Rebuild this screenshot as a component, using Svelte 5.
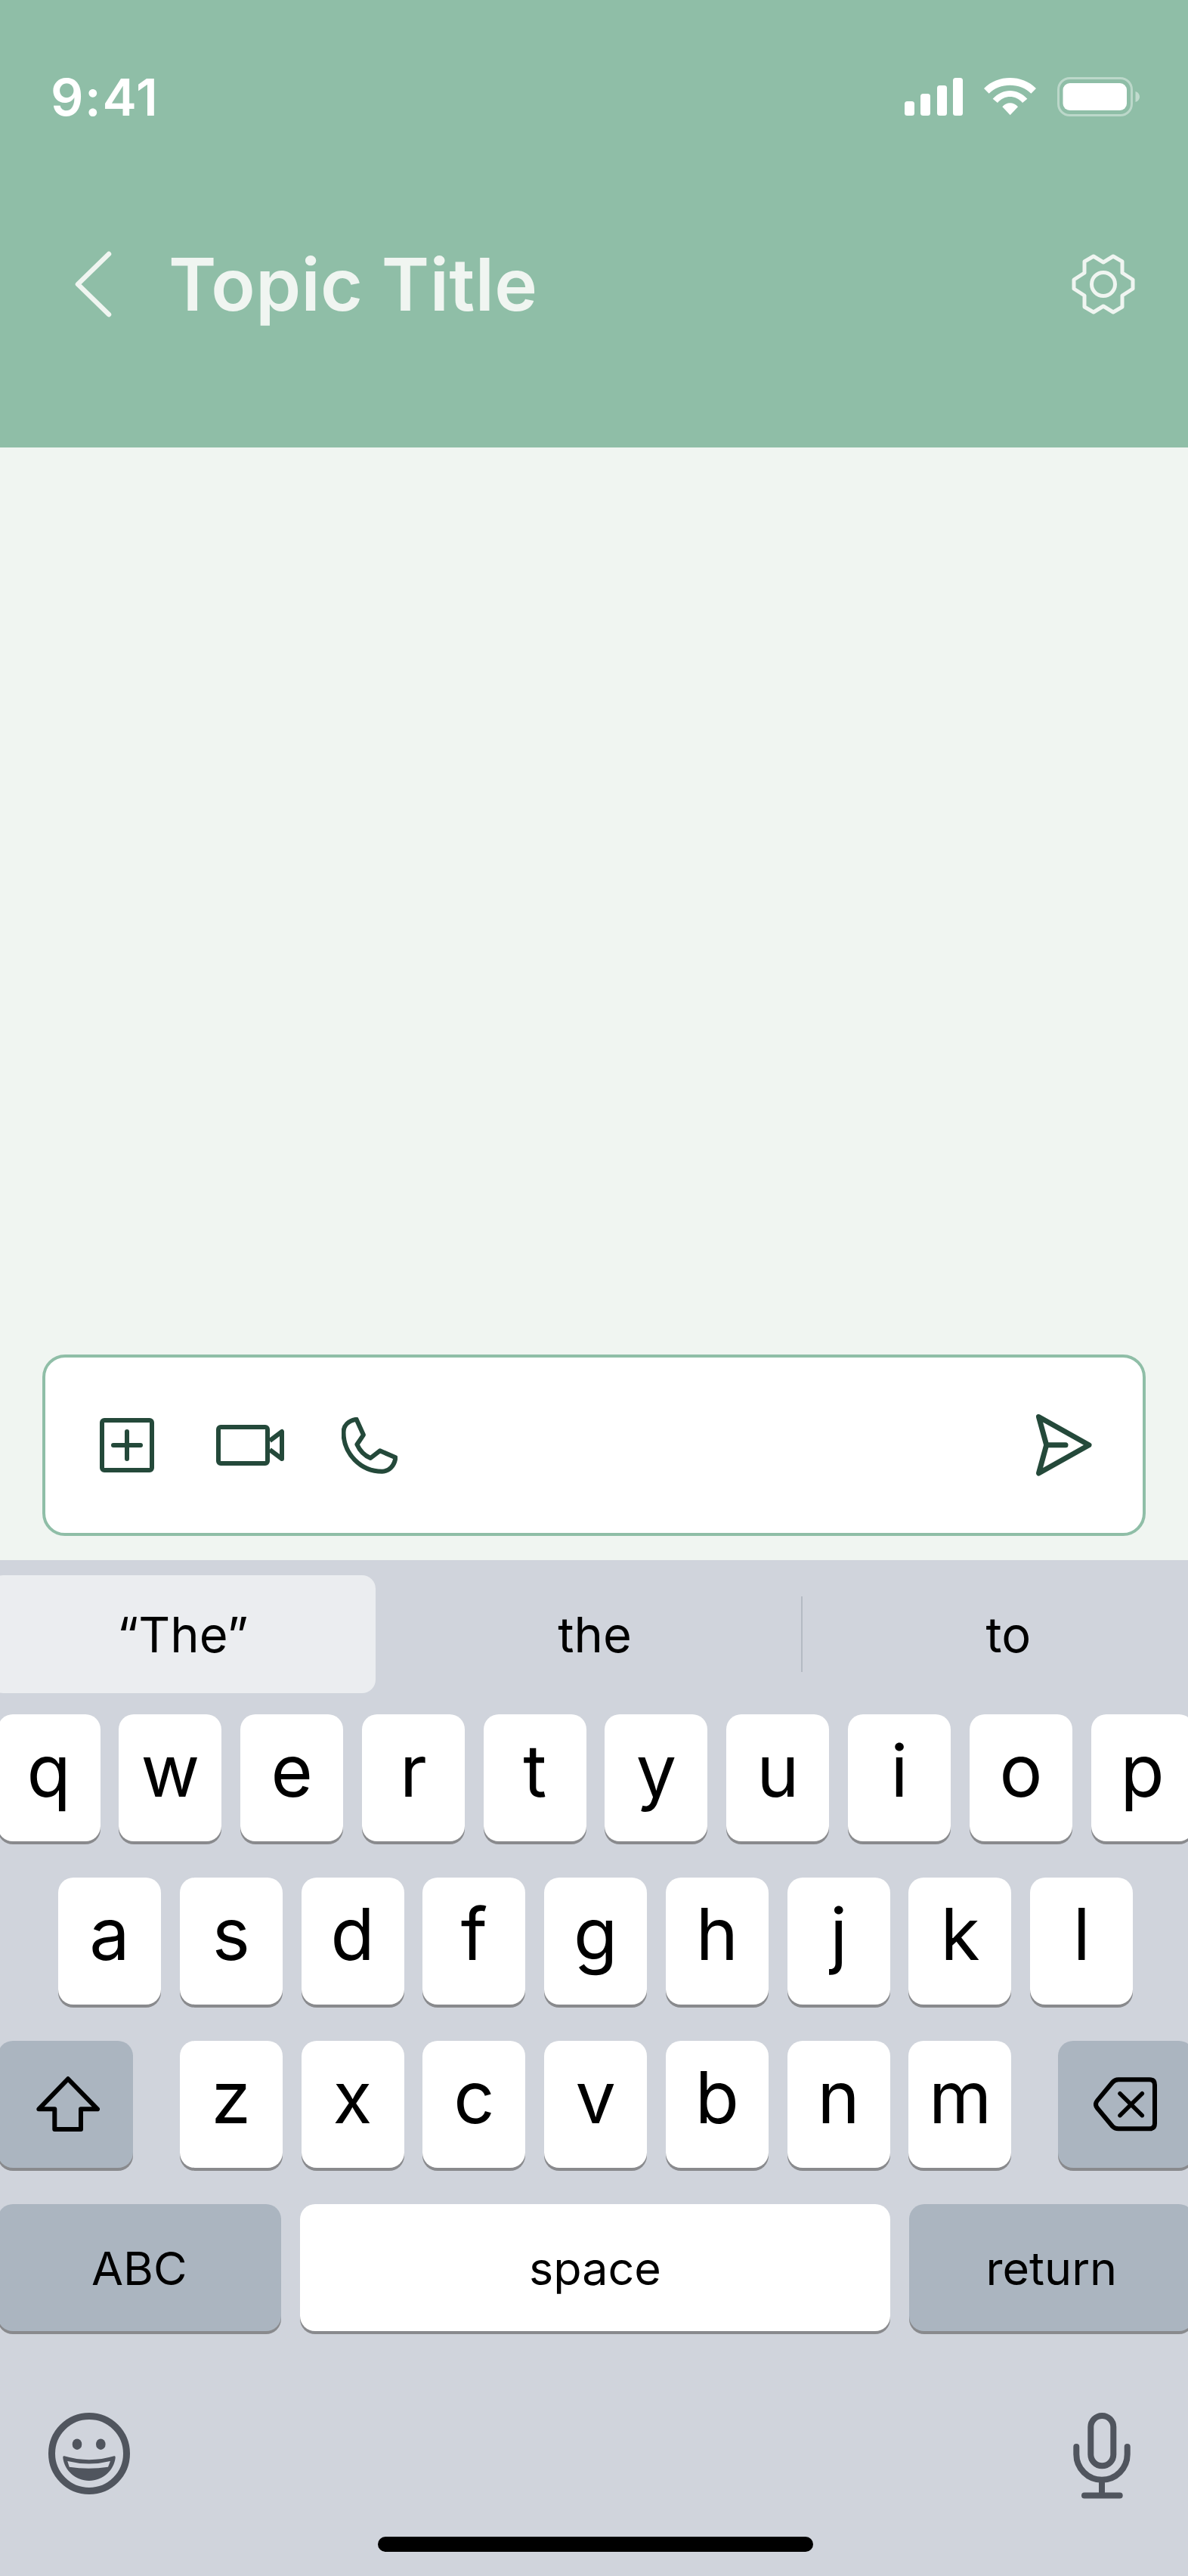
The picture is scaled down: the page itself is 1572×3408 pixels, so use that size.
<script>
    const row1 = ["q", "w", "e", "r", "t", "y", "u", "i", "o", "p"];
    const row2 = ["a", "s", "d", "f", "g", "h", "j", "k", "l"];
    const row3 = ["z", "x", "c", "v", "b", "n", "m"];
</script>

<div class="screen">
    <header class="topbar">
        <div class="status">
            <span class="time">9:41</span>
            <div class="status-icons">
                <svg width="77" height="50" viewBox="0 0 77 50" fill="#fff">
                    <rect x="0" y="31" width="13" height="19" rx="3.5" />
                    <rect x="21" y="21" width="13" height="29" rx="3.5" />
                    <rect x="43" y="10" width="13" height="40" rx="3.5" />
                    <rect x="64" y="0" width="13" height="50" rx="3.5" />
                </svg>
                <svg width="69" height="50" viewBox="0 0 207 150" fill="#fff">
                    <path d="M0 42C55-14 152-14 207 42L187 62C145 18 62 18 20 62Z" />
                    <path d="M35 83C75 40 132 40 172 83L153 99C125 67 82 67 54 99Z" />
                    <path d="M73 115C90 95 117 95 135 115L104 148Z" />
                </svg>
                <svg width="110" height="52" viewBox="0 0 110 52">
                    <rect x="1.5" y="1.5" width="97" height="49" rx="15" fill="none" stroke="#fff" stroke-opacity="0.4" stroke-width="3" />
                    <rect x="7.5" y="8" width="84.5" height="36" rx="9" fill="#fff" />
                    <path d="M103.5 19C107 20 109 23 109 26C109 29 107 32 103.5 33Z" fill="#fff" fill-opacity="0.45" />
                </svg>
            </div>
        </div>
        <div class="titlebar">
            <svg class="back" width="50" height="88" viewBox="0 0 50 88" fill="none" stroke="#f0f5f1" stroke-width="6.5" stroke-linecap="round" stroke-linejoin="round">
                <path d="M45 4L4 44L45 84" />
            </svg>
            <h1>Topic Title</h1>
            <svg class="gear" width="84" height="80" viewBox="-42 -40 84 80" fill="none" stroke="#f0f5f1" stroke-width="5" stroke-linejoin="round">
                <path d="M-13-37L0-29L13-37L25-30V-15L39-6V6L25 15V30L13 37L0 29L-13 37L-25 30V15L-39 6V-6L-25-15V-30Z" />
                <circle r="15.5" />
            </svg>
        </div>
    </header>

    <main class="content">
        <div class="composer">
            <svg width="72" height="72" viewBox="0 0 72 72" class="ico" stroke-width="6">
                <rect x="3" y="3" width="66" height="66" rx="3" />
                <path d="M18 36H54M36 18V54" stroke-linecap="round" />
            </svg>
            <svg width="90" height="54" viewBox="0 0 90 54" class="ico video" stroke-width="6">
                <rect x="3" y="3" width="65" height="48" rx="3" />
                <path d="M71 21L87 9V45L71 33" stroke-linejoin="round" />
            </svg>
            <svg width="74" height="75" viewBox="0 0 74 75" class="ico phone" stroke-width="6" stroke-linejoin="round">
                <path d="M19.6 2.7L28.9 23.3L20.4 36C24 44 31 51 38.2 54L50.7 44.3L71.4 53.3C70 64 63 71.7 53.6 71.7C25 71.7 2.5 48 2.5 20C2.5 11 9 4.5 19.6 2.7Z" />
            </svg>
            <svg width="76" height="84" viewBox="0 0 76 84" class="ico send" stroke-width="7" stroke-linejoin="round" stroke-linecap="round">
                <path d="M4.5 4.5L71 41.7L4.5 79L14.7 41.7Z" />
                <path d="M14.7 41.7H40" />
            </svg>
        </div>
    </main>

    <section class="keyboard">
        <div class="suggestions">
            <div class="suggest"><span class="pill">“The”</span></div>
            <div class="suggest">the</div>
            <i class="divider"></i>
            <div class="suggest">to</div>
        </div>

        <div class="rows">
            <div class="row">
                {#each row1 as k}
                    <div class="key">{k}</div>
                {/each}
            </div>
            <div class="row center">
                {#each row2 as k}
                    <div class="key">{k}</div>
                {/each}
            </div>
            <div class="row between">
                <div class="key mod wide shift">
                    <svg width="84" height="74" viewBox="0 0 84 74" fill="none" stroke="#000" stroke-width="6" stroke-linejoin="round">
                        <path d="M42 3.3L81 43.3H59V70H24.3V43.3H3.3Z" />
                    </svg>
                </div>
                <div class="letters">
                    {#each row3 as k}
                        <div class="key">{k}</div>
                    {/each}
                </div>
                <div class="key mod wide">
                    <svg width="85" height="72" viewBox="0 0 85 72" fill="none" stroke="#000" stroke-width="6" stroke-linejoin="round" stroke-linecap="round">
                        <path d="M33 3.3H74Q81 3.3 81 10.3V61.3Q81 68.3 74 68.3H33Q28 68.3 25 65L5 41Q1 36 5 31L25 7Q28 3.3 33 3.3Z" />
                        <path d="M35 21.7L64.3 50.7M64.3 21.7L35 50.7" stroke-width="5.5" />
                    </svg>
                </div>
            </div>
            <div class="row">
                <div class="key mod label abc">ABC</div>
                <div class="key label spacebar">space</div>
                <div class="key mod label ret">return</div>
            </div>
        </div>

        <div class="bottom">
            <svg width="108" height="108" viewBox="0 0 108 108">
                <circle cx="54" cy="54" r="49.5" fill="none" stroke="#50555e" stroke-width="9" />
                <g fill="#50555e">
                    <ellipse cx="38" cy="41.7" rx="6.3" ry="7.3" />
                    <ellipse cx="69.3" cy="41.7" rx="6.3" ry="7.3" />
                    <path fill-rule="evenodd" d="M21 57.3Q54 67 87 57.3Q89 57 88.7 59.5C87 76 72 90 54 90C36 90 21 76 19.3 59.5Q19 57 21 57.3ZM25.3 64L27.7 71.7Q53.3 76 79 71.7L82 64Q54 71 25.3 64Z" />
                </g>
            </svg>
            <svg width="76" height="114" viewBox="0 0 76 114" fill="none" stroke="#50555e" stroke-width="8" stroke-linecap="round">
                <rect x="23.3" y="4" width="30" height="66.3" rx="15" />
                <path d="M4.3 45V55A33.7 33.7 0 0 0 71.7 55V45" />
                <path d="M38 89V109M15 109.5H61.7" />
            </svg>
        </div>

        <div class="home"></div>
    </section>
</div>

<style>
    :global(body) {
        margin: 0;
    }

    .screen {
        width: 1572px;
        height: 3408px;
        display: flex;
        flex-direction: column;
        overflow: hidden;
        font-family: Inter, "Liberation Sans", sans-serif;
        background: #f0f5f1;
    }

    .topbar {
        height: 592px;
        flex: none;
        background: #8fbea7;
    }

    .status {
        display: flex;
        justify-content: space-between;
        align-items: center;
        height: 52px;
        padding: 102px 63px 0 67px;
    }

    .time {
        font-size: 68px;
        font-weight: 600;
        line-height: 52px;
        letter-spacing: 1.6px;
        color: #fff;
    }

    .status-icons {
        display: flex;
        align-items: center;
        gap: 28px;
    }

    .titlebar {
        display: flex;
        align-items: center;
        height: 88px;
        margin-top: 178px;
        padding: 0 70px 0 99px;
    }

    h1 {
        margin: 0 0 0 74px;
        font-size: 96px;
        font-weight: 600;
        line-height: 88px;
        letter-spacing: 0.4px;
        color: #f0f5f1;
    }

    .gear {
        margin-left: auto;
    }

    .content {
        flex: 1;
        display: flex;
        flex-direction: column;
        justify-content: flex-end;
        padding: 0 56px 32px;
    }

    .composer {
        display: flex;
        align-items: center;
        box-sizing: border-box;
        height: 240px;
        padding: 0 66px 0 72px;
        background: #fff;
        border: 4px solid #8fbea7;
        border-radius: 30px;
    }

    .ico {
        flex: none;
        fill: none;
        stroke: #24493a;
    }

    .video {
        margin-left: 82px;
    }

    .phone {
        margin-left: 76px;
    }

    .send {
        margin-left: auto;
    }

    .keyboard {
        flex: none;
        height: 1344px;
        box-sizing: border-box;
        padding-top: 20px;
        background: #d0d4dc;
    }

    .suggestions {
        display: flex;
        align-items: center;
        height: 156px;
        margin: 0 -35px 0 -31px;
        font-size: 65px;
        color: #000;
    }

    .suggest {
        flex: 1;
        height: 100%;
        display: flex;
        align-items: center;
        justify-content: center;
    }

    .pill {
        flex: 1;
        align-self: stretch;
        margin: 0 17px;
        display: flex;
        align-items: center;
        justify-content: center;
        background: #ebedf0;
        border-radius: 18px;
    }

    .divider {
        flex: none;
        width: 2px;
        height: 100px;
        background: #b4bac3;
    }

    .rows {
        display: flex;
        flex-direction: column;
        gap: 48px;
        margin: 28px -7.7px 0 -3.5px;
    }

    .row,
    .letters {
        display: flex;
        gap: 24.8px;
    }

    .row.center {
        justify-content: center;
    }

    .row.between {
        justify-content: space-between;
    }

    .key {
        flex: none;
        width: 136px;
        height: 168px;
        display: flex;
        align-items: center;
        justify-content: center;
        box-sizing: border-box;
        padding-bottom: 20px;
        background: #fff;
        border-radius: 20px;
        box-shadow: 0 4px 0 #898a8d;
        font-size: 95px;
        line-height: 1;
        color: #000;
    }

    .key.mod {
        background: #abb5c0;
    }

    .key.wide {
        width: 179.6px;
        padding-bottom: 0;
    }

    .key.shift {
        padding-left: 8px;
    }

    .key.label {
        font-size: 61px;
        padding-top: 3px;
        padding-bottom: 0;
    }

    .abc {
        width: 375.5px;
    }

    .ret {
        width: 376.7px;
    }

    .key.spacebar {
        flex: 1;
    }

    .bottom {
        display: flex;
        justify-content: space-between;
        align-items: flex-start;
        height: 114px;
        margin-top: 108px;
        padding: 0 76px 0 64px;
    }

    .home {
        width: 576px;
        height: 20px;
        margin: 50px 0 0 500px;
        background: #000;
        border-radius: 10px;
    }
</style>
